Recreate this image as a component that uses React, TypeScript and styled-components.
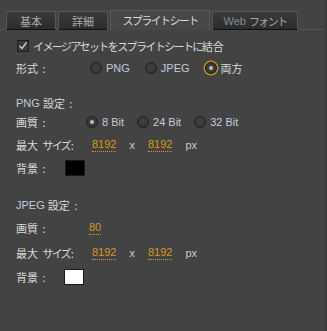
import React from "react";
import styled, { createGlobalStyle, css } from "styled-components";

const GlobalStyle = createGlobalStyle`
  html, body {
    margin: 0;
    padding: 0;
    background: #3b3b3b;
  }
  body {
    font-family: "Liberation Sans", "Noto Sans CJK JP", sans-serif;
  }
`;

const Panel = styled.div`
  width: 325px;
  height: 331px;
  background: #434343;
  box-sizing: border-box;
`;

const TabBar = styled.div`
  display: flex;
  align-items: flex-end;
  gap: 2px;
  height: 30px;
  padding-left: 6px;
  box-sizing: border-box;
  border-bottom: 1px solid #555;
`;

const Tab = styled.div<{ $active?: boolean; $width: number }>`
  display: flex;
  align-items: center;
  justify-content: center;
  width: ${({ $width }) => $width}px;
  height: 19px;
  box-sizing: border-box;
  border: 1px solid #575757;
  border-bottom: 1px solid #111;
  background: linear-gradient(#3a3a3a, #2c2c2c);
  color: #c4c4c4;
  margin-bottom: -1px;
  ${({ $active }) =>
    $active &&
    css`
      height: 20px;
      background: #474747;
      border-color: #595959;
      border-bottom: 1px solid #474747;
      color: #e4e4e4;
    `}
`;

const Jp = styled.span<{ $kana?: boolean; $muted?: boolean }>`
  font-family: "Noto Sans CJK JP", sans-serif;
  font-size: 11px;
  line-height: 14px;
  letter-spacing: ${({ $kana }) => ($kana ? "-1.6px" : "0")};
  word-spacing: 2px;
  color: ${({ $muted }) => ($muted ? "#a9a9a9" : "#dadada")};
  white-space: pre;
`;

// kana inside a kanji label are set tighter, kanji inside a kana run are not
const Kana = styled.span`
  letter-spacing: -1.8px;
  margin-right: 1px;
`;

const Kanji = styled.span`
  letter-spacing: 0;
`;

const Lat = styled.span<{ $dim?: boolean }>`
  font-family: "Liberation Sans", sans-serif;
  font-size: 11px;
  color: ${({ $dim }) => ($dim ? "#7f8c9c" : "#c2cbd8")};
  white-space: pre;
`;

const Content = styled.div`
  display: flex;
  flex-direction: column;
  padding-left: 16px;
`;

const Row = styled.div<{ $mt: number }>`
  display: flex;
  align-items: center;
  height: 18px;
  margin-top: ${({ $mt }) => $mt}px;
`;

const Label = styled.div<{ $w: number }>`
  width: ${({ $w }) => $w}px;
  flex: none;
  display: flex;
  align-items: center;
`;

const Check = styled.span`
  width: 12px;
  height: 12px;
  box-sizing: border-box;
  border: 1px solid #1e1e1e;
  background: #3a3a3a;
  margin: 0 4px 0 1px;
  display: flex;
  align-items: center;
  justify-content: center;
`;

const Options = styled.div<{ $gap: number }>`
  display: flex;
  align-items: center;
  gap: ${({ $gap }) => $gap}px;
`;

const Option = styled.div`
  display: flex;
  align-items: center;
  gap: 4px;
`;

const Radio = styled.span<{ $on?: boolean; $focus?: boolean }>`
  width: 12px;
  height: 12px;
  box-sizing: border-box;
  border-radius: 50%;
  border: 1px solid #1f1f1f;
  background: radial-gradient(circle at 50% 40%, #404040, #333);
  display: flex;
  align-items: center;
  justify-content: center;
  ${({ $focus }) =>
    $focus &&
    css`
      box-shadow: 0 0 0 1.5px #c58f16;
    `}
  &::after {
    content: "";
    display: ${({ $on }) => ($on ? "block" : "none")};
    width: 4px;
    height: 4px;
    border-radius: 50%;
    background: #bdbdbd;
  }
`;

const Value = styled.span`
  font-family: "Liberation Sans", sans-serif;
  font-size: 11px;
  color: #d39a1c;
  border-bottom: 1px dotted #d39a1c;
  line-height: 12px;
  padding-bottom: 1px;
`;

const SizeGroup = styled.div`
  display: flex;
  align-items: center;
  gap: 13px;
`;

const Swatch = styled.span<{ $color: string }>`
  width: 20px;
  height: 16px;
  box-sizing: border-box;
  background: ${({ $color }) => $color};
  border: 1px solid #1a1a1a;
`;

function SizeRow({ mt }: { mt: number }) {
  return (
    <Row $mt={mt}>
      <Label $w={76}>
        <Jp>
          最大 <Kana>サイズ</Kana>:
        </Jp>
      </Label>
      <SizeGroup>
        <Value>8192</Value>
        <Lat>x</Lat>
        <Value>8192</Value>
        <Lat>px</Lat>
      </SizeGroup>
    </Row>
  );
}

export default function App() {
  return (
    <>
      <GlobalStyle />
      <Panel>
        <TabBar>
          <Tab $width={50}>
            <Jp $muted>基本</Jp>
          </Tab>
          <Tab $width={50}>
            <Jp $muted>詳細</Jp>
          </Tab>
          <Tab $width={100} $active>
            <Jp $kana>スプライトシート</Jp>
          </Tab>
          <Tab $width={86}>
            <Lat $dim>Web </Lat>
            <Jp $kana $muted>
              フォント
            </Jp>
          </Tab>
        </TabBar>
        <Content>
          <Row $mt={7}>
            <Check>
              <svg width="10" height="10" viewBox="0 0 10 10">
                <path d="M1.5 5 L4 7.5 L8.5 1.5" stroke="#cfcfcf" strokeWidth="1.4" fill="none" />
              </svg>
            </Check>
            <Jp $kana>
              イメージアセットをスプライトシートに<Kanji>結合</Kanji>
            </Jp>
          </Row>
          <Row $mt={4}>
            <Label $w={74}>
              <Jp>形式 :</Jp>
            </Label>
            <Options $gap={15}>
              <Option>
                <Radio />
                <Lat>PNG</Lat>
              </Option>
              <Option>
                <Radio />
                <Lat>JPEG</Lat>
              </Option>
              <Option>
                <Radio $on $focus />
                <Jp>両方</Jp>
              </Option>
            </Options>
          </Row>

          <Row $mt={17}>
            <Lat>PNG </Lat>
            <Jp>設定 :</Jp>
          </Row>
          <Row $mt={1}>
            <Label $w={70}>
              <Jp>画質 :</Jp>
            </Label>
            <Options $gap={13}>
              <Option>
                <Radio $on />
                <Lat>8 Bit</Lat>
              </Option>
              <Option>
                <Radio />
                <Lat>24 Bit</Lat>
              </Option>
              <Option>
                <Radio />
                <Lat>32 Bit</Lat>
              </Option>
            </Options>
          </Row>
          <SizeRow mt={5} />
          <Row $mt={5}>
            <Label $w={49}>
              <Jp>背景 :</Jp>
            </Label>
            <Swatch $color="#000" />
          </Row>

          <Row $mt={19}>
            <Lat>JPEG </Lat>
            <Jp>設定 :</Jp>
          </Row>
          <Row $mt={5}>
            <Label $w={73}>
              <Jp>画質 :</Jp>
            </Label>
            <Value>80</Value>
          </Row>
          <SizeRow mt={7} />
          <Row $mt={6}>
            <Label $w={48}>
              <Jp>背景 :</Jp>
            </Label>
            <Swatch $color="#fff" />
          </Row>
        </Content>
      </Panel>
    </>
  );
}
